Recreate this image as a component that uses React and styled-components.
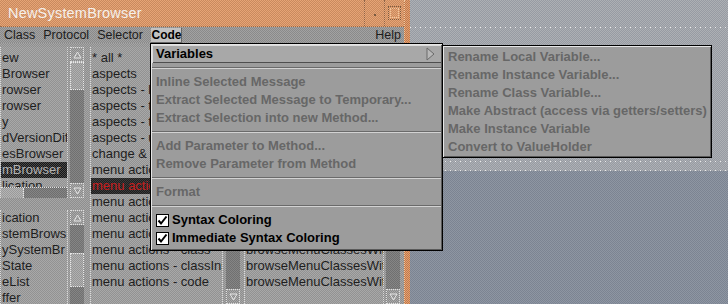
import React from 'react';
import styled, { createGlobalStyle, css } from 'styled-components';

// 1px checkerboard, to imitate the old dithered screen
const dither = (a, b) => css`
  background-color: ${a};
  background-image: repeating-conic-gradient(${b} 0 25%, transparent 0 50%);
  background-size: 2px 2px;
`;

const GlobalStyle = createGlobalStyle`
  html, body { margin: 0; padding: 0; overflow: hidden; }
  body { font-family: "Liberation Sans", Arial, sans-serif; }
`;

const Desktop = styled.div`
  position: relative;
  display: flex;
  width: 728px;
  height: 304px;
  overflow: hidden;
`;

const Frame = styled.div`
  display: flex;
  flex: none;
  height: 100%;
`;

const Main = styled.div`
  width: 404px;
  display: flex;
  flex-direction: column;
  ${dither('#a6a6a6', '#8e8e8e')}
`;

const Edge = styled.div`
  width: 6px;
  border-left: 1px dotted #f0c8a0;
  box-sizing: border-box;
  ${dither('#e4a072', '#c07a4c')}
`;

const TitleBar = styled.div`
  height: 27px;
  display: flex;
  align-items: center;
  ${dither('#e6a476', '#c98a5e')}
  border-bottom: 1px dotted #9a6a48;
  box-sizing: border-box;
`;

const Title = styled.div`
  padding-left: 8px;
  font-size: 14.5px;
  letter-spacing: 0.2px;
  color: #f4f0ec;
`;

const TitleButtons = styled.div`
  margin-left: auto;
  display: flex;
  height: 100%;
`;

const TitleButton = styled.div`
  width: 20px;
  height: 100%;
  border-left: 1px dotted #8e6448;
  display: flex;
  align-items: center;
  justify-content: center;
  box-sizing: border-box;
`;

const Dot = styled.div`
  width: 2px;
  height: 2px;
  margin-top: 4px;
  background: #7a5a40;
`;

const Square = styled.div`
  width: 11px;
  height: 12px;
  border: 1px dotted #7a5a40;
  outline: 1px dotted #f0c8a0;
  outline-offset: -3px;
`;

const MenuBar = styled.div`
  height: 16px;
  display: flex;
  align-items: center;
  gap: 8px;
  padding: 0 3px 0 4px;
  font-size: 12.5px;
  color: #1c1c1c;
  ${dither('#a2a2a2', '#8a8a8a')}
`;

const BarItem = styled.span`
  ${(p) => p.$open && css`
    font-weight: bold;
    font-size: 12px;
    color: #000;
    background: #c2c2c2;
    width: 31px;
    height: 15px;
    line-height: 15px;
    text-align: center;
    box-shadow: inset -1px -1px 0 #666;
  `}
  ${(p) => p.$right && css`margin-left: auto;`}
`;

const Body = styled.div`
  flex: 1;
  display: flex;
  padding: 4px 4px 0 0;
  min-height: 0;
`;

const LeftStack = styled.div`
  width: 84px;
  display: flex;
  flex-direction: column;
`;

const Pane = styled.div`
  display: flex;
  gap: ${(p) => p.$gap || 2}px;
  margin-left: ${(p) => p.$offset || 0}px;
  margin-top: ${(p) => p.$top || 0}px;
  height: ${(p) => (p.$height ? `${p.$height}px` : 'auto')};
  flex: ${(p) => (p.$height ? 'none' : 1)};
  min-height: 0;
`;

const ListColumn = styled.div`
  width: ${(p) => p.$width}px;
  display: flex;
  flex-direction: column;
  border-right: 1px dotted #dadada;
  border-left: 1px dotted #dadada;
  box-sizing: border-box;
  ${dither('#a8a8a8', '#929292')}
`;

const Items = styled.div`
  flex: 1;
  overflow: hidden;
  padding-top: ${(p) => p.$pad ?? 3}px;
`;

const Row = styled.div`
  height: 16px;
  line-height: 16px;
  padding-left: 1px;
  font-size: 13px;
  color: #1e1e1e;
  white-space: nowrap;
  overflow: hidden;
  ${(p) => p.$sel === 'dark' && css`
    ${dither('#161616', '#4a4a4a')}
    color: #b4b4b4;
  `}
  ${(p) => p.$sel === 'red' && css`
    ${dither('#1e1e1e', '#3c3c3c')}
    color: #c81e1e;
  `}
`;

const HScroll = styled.div`
  height: 11px;
  display: flex;
  border-top: 1px dotted #e0e0e0;
  box-sizing: border-box;
  ${dither('#858585', '#6e6e6e')}
`;

const HThumb = styled.div`
  width: 22px;
  border-right: 1px dotted #e8e8e8;
  ${dither('#b4b4b4', '#9a9a9a')}
`;

const VScroll = styled.div`
  width: 14px;
  display: flex;
  flex-direction: column;
  ${dither('#858585', '#707070')}
`;

const Arrow = styled.div`
  height: 13px;
  display: flex;
  align-items: center;
  justify-content: center;
  border: 1px dotted #e0e0e0;
  ${dither('#a8a8a8', '#8c8c8c')}
`;

const Thumb = styled.div`
  height: ${(p) => p.$size}px;
  margin-top: ${(p) => p.$at}px;
  border: 1px dotted #e8e8e8;
  ${dither('#b0b0b0', '#969696')}
`;

const Track = styled.div`
  flex: 1;
`;

const Menu = styled.div`
  position: absolute;
  left: ${(p) => p.$x}px;
  top: ${(p) => p.$y}px;
  width: ${(p) => p.$w}px;
  box-sizing: border-box;
  padding: ${(p) => p.$pad || '1px 0 3px'};
  background: #9c9c9c;
  border: 1px solid #000;
  box-shadow: inset 1px 1px 0 #e6e6e6, inset -1px -1px 0 #5a5a5a;
  font-size: 13px;
  font-weight: bold;
`;

const Item = styled.div`
  height: 18px;
  line-height: 18px;
  display: flex;
  align-items: center;
  gap: 3px;
  padding: 0 6px 0 4px;
  margin: 0 1px;
  white-space: nowrap;
  color: ${(p) => (p.$enabled ? '#000' : '#676767')};
  ${(p) => p.$active && css`
    background: #a8a8a8;
    box-shadow: inset 0 1px 0 #dcdcdc, inset 1px 0 0 #dcdcdc, inset 0 -1px 0 #4e4e4e;
  `}
`;

const Separator = styled.div`
  height: 10px;
  display: flex;
  align-items: center;
  margin: 0 1px;
  &::after {
    content: '';
    flex: 1;
    height: 1px;
    border-top: 1px solid #6a6a6a;
    background: #d2d2d2;
  }
`;

const SubArrow = styled.svg`
  margin-left: auto;
  width: 9px;
  height: 14px;
`;

const Check = styled.svg`
  width: 13px;
  height: 13px;
  flex: none;
`;

const RightSide = styled.div`
  flex: 1;
  display: flex;
  flex-direction: column;
`;

const BackWindow = styled.div`
  height: 171px;
  display: flex;
  flex-direction: column;
  padding-top: 27px;
  box-sizing: border-box;
  ${dither('#adb0b4', '#979ba3')}
`;

const DottedRule = styled.div`
  height: 1px;
  margin-top: ${(p) => p.$top || 0};
  background-image: repeating-linear-gradient(90deg, #ececec 0 1px, transparent 1px 5px);
`;

const Wallpaper = styled.div`
  flex: 1;
  ${dither('#8e96a2', '#7c8492')}
`;

const topLeft = ['ew', 'Browser', 'rowser', 'rowser', 'y', 'dVersionDif', 'esBrowser', 'mBrowser', 'lication'];
const bottomLeft = ['ication', 'stemBrows:', 'ySystemBr', 'State', 'eList', 'ffer'];
const protocols = [
  '* all *', 'aspects', 'aspects - list', 'aspects - text', 'aspects - tree', 'aspects - ui',
  'change & update', 'menu actions', 'menu actions - browse', 'menu actions - category',
  'menu actions - changes', 'menu actions - checks', 'menu actions - class',
  'menu actions - classInstVar', 'menu actions - code',
];
const selectors = Array.from({ length: 15 }, () => 'browseMenuClassesWithString');

const codeMenu = [
  { label: 'Variables', enabled: true, active: true, sub: true },
  '-',
  { label: 'Inline Selected Message' },
  { label: 'Extract Selected Message to Temporary...' },
  { label: 'Extract Selection into new Method...' },
  '-',
  { label: 'Add Parameter to Method...' },
  { label: 'Remove Parameter from Method' },
  '-',
  { label: 'Format' },
  '-',
  { label: 'Syntax Coloring', enabled: true, check: true },
  { label: 'Immediate Syntax Coloring', enabled: true, check: true },
];

const variablesMenu = [
  'Rename Local Variable...',
  'Rename Instance Variable...',
  'Rename Class Variable...',
  'Make Abstract (access via getters/setters)',
  'Make Instance Variable',
  'Convert to ValueHolder',
];

const ScrollBar = ({ thumb, at, down = true }) => (
  <VScroll>
    <Arrow>
      <svg width="9" height="8"><path d="M4.5 1 L8 7 L1 7 Z" fill="none" stroke="#e6e6e6" /></svg>
    </Arrow>
    {thumb ? <Thumb $size={thumb} $at={at} /> : null}
    <Track />
    {down && (
      <Arrow>
        <svg width="9" height="8"><path d="M1 1 L8 1 L4.5 7 Z" fill="none" stroke="#e6e6e6" /></svg>
      </Arrow>
    )}
  </VScroll>
);

export default function App() {
  return (
    <Desktop>
      <GlobalStyle />
      <Frame>
        <Main>
          <TitleBar>
            <Title>NewSystemBrowser</Title>
            <TitleButtons>
              <TitleButton><Dot /></TitleButton>
              <TitleButton><Square /></TitleButton>
            </TitleButtons>
          </TitleBar>
          <MenuBar>
            <BarItem>Class</BarItem>
            <BarItem>Protocol</BarItem>
            <BarItem>Selector</BarItem>
            <BarItem $open>Code</BarItem>
            <BarItem $right>Help</BarItem>
          </MenuBar>
          <Body>
            <LeftStack>
              <Pane $height={151}>
                <ListColumn $width={68}>
                  <Items>
                    {topLeft.map((t, i) => (
                      <Row key={i} $sel={i === 7 ? 'dark' : undefined}>{t}</Row>
                    ))}
                  </Items>
                  <HScroll><HThumb /></HScroll>
                </ListColumn>
                <ScrollBar thumb={26} at={0} />
              </Pane>
              <Pane $top={12}>
                <ListColumn $width={68}>
                  <Items $pad={0}>
                    {bottomLeft.map((t, i) => <Row key={i}>{t}</Row>)}
                  </Items>
                </ListColumn>
                <ScrollBar thumb={32} at={28} down={false} />
              </Pane>
            </LeftStack>
            <Pane $offset={6} $gap={3}>
              <ListColumn $width={133}>
                <Items>
                  {protocols.map((t, i) => (
                    <Row key={i} $sel={i === 8 ? 'red' : undefined}>{t}</Row>
                  ))}
                </Items>
              </ListColumn>
              <ScrollBar />
            </Pane>
            <Pane $offset={4}>
              <ListColumn $width={140}>
                <Items>
                  {selectors.map((t, i) => <Row key={i}>{t}</Row>)}
                </Items>
              </ListColumn>
              <ScrollBar />
            </Pane>
          </Body>
        </Main>
        <Edge />
      </Frame>
      <RightSide>
        <BackWindow>
          <DottedRule />
          <DottedRule $top="auto" />
          <DottedRule $top="8px" />
        </BackWindow>
        <Wallpaper />
      </RightSide>

      <Menu $x={150} $y={43} $w={293}>
        {codeMenu.map((m, i) =>
          m === '-' ? (
            <Separator key={i} />
          ) : (
            <Item key={i} $enabled={m.enabled} $active={m.active}>
              {m.check && (
                <Check viewBox="0 0 13 13">
                  <rect x="0.5" y="0.5" width="12" height="12" fill="#fff" stroke="#000" />
                  <path d="M2.5 6.5 L5 9.5 L10.5 2.5" fill="none" stroke="#000" strokeWidth="2" />
                </Check>
              )}
              {m.label}
              {m.sub && (
                <SubArrow viewBox="0 0 9 14">
                  <path d="M1 1 L8 7 L1 13 Z" fill="#b8b8b8" stroke="#6a6a6a" />
                </SubArrow>
              )}
            </Item>
          )
        )}
      </Menu>
      <Menu $x={442} $y={45} $w={270} $pad="2px 0 1px">
        {variablesMenu.map((t) => (
          <Item key={t}>{t}</Item>
        ))}
      </Menu>
    </Desktop>
  );
}
